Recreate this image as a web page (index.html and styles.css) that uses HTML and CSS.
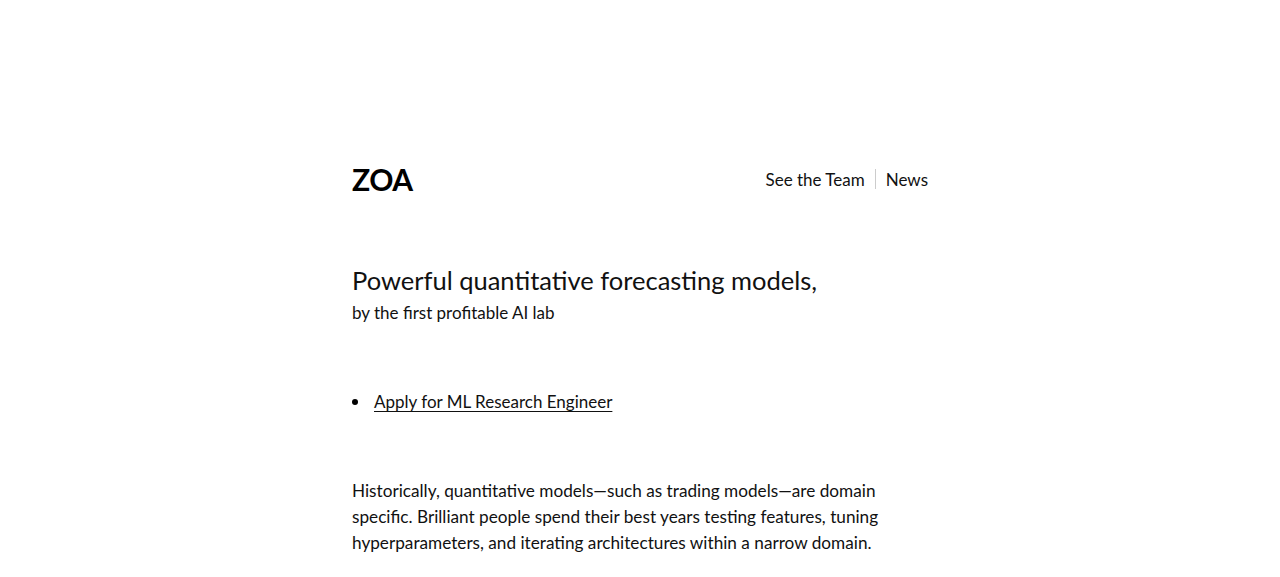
FILE: index.html
```html
<!DOCTYPE html>
<html lang="en">
<head>
    <meta charset="UTF-8">
    <meta name="viewport" content="width=device-width, initial-scale=1.0">
    <title>Zoa</title>
    <link rel="stylesheet" href="styles.css">
</head>
<body>

<div class="page">
    <header class="top">
        <a class="logo" href="#">ZOA</a>
        <nav class="nav">
            <a href="#">See the Team</a>
            <span class="sep"></span>
            <a href="#">News</a>
        </nav>
    </header>

    <section class="hero">
        <h1>Powerful quantitative forecasting models,</h1>
        <p class="sub">by the first profitable AI lab</p>
    </section>

    <ul class="jobs">
        <li><a href="#">Apply for ML Research Engineer</a></li>
    </ul>

    <p class="body-text">
        Historically, quantitative models—such as trading models—are domain
        specific. Brilliant people spend their best years testing features, tuning
        hyperparameters, and iterating architectures within a narrow domain.
    </p>
</div>

</body>
</html>
```

FILE: styles.css
```css
body {
    margin: 0;
    padding: 0;
    background: #fff;
    color: #111;
    font-family: Lato, "Noto Sans", sans-serif;
}
a {
    color: inherit;
}
.page {
    width: 576px;
    margin: 0 auto;
    padding-top: 159px;
}
.top {
    display: flex;
    justify-content: space-between;
    align-items: center;
    height: 40px;
}
.logo {
    font-size: 30px;
    font-weight: 700;
    letter-spacing: -0.5px;
    text-decoration: none;
    color: #000;
}
.nav {
    display: flex;
    align-items: center;
    gap: 10px;
    font-size: 17px;
}
.nav a {
    text-decoration: none;
}
.sep {
    width: 1px;
    height: 20px;
    background: #ccc;
}
.hero {
    margin-top: 64px;
}
.hero h1 {
    margin: 0;
    font-size: 25.5px;
    font-weight: 400;
    line-height: 34px;
}
.sub {
    margin: 3px 0 0;
    font-size: 17px;
    line-height: 26px;
}
.jobs {
    list-style: none;
    margin: 63px 0 0;
    padding: 0;
    font-size: 17px;
    line-height: 26px;
}
.jobs li {
    display: flex;
    align-items: center;
}
/* small round dot instead of the default marker */
.jobs li::before {
    content: "";
    width: 6px;
    height: 6px;
    border-radius: 50%;
    background: #000;
    margin-right: 16px;
}
.jobs a {
    text-underline-offset: 3px;
}
.body-text {
    margin: 63px 0 0;
    font-size: 17.2px;
    line-height: 26px;
}
```
